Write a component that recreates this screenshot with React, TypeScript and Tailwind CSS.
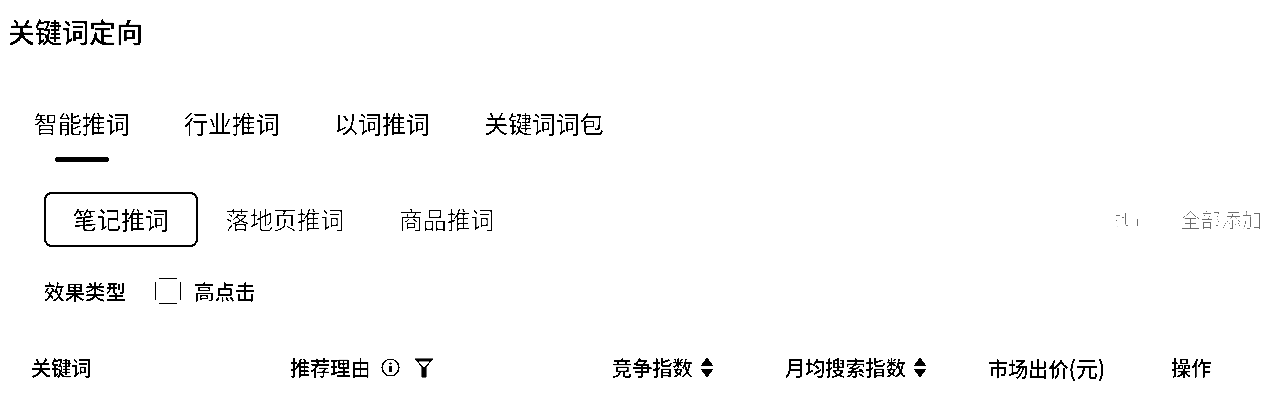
const FONT = "font-['Noto_Sans_CJK_SC','Noto_Sans',sans-serif]";

const TABS = ['智能推词', '行业推词', '以词推词', '关键词词包'];
const SOURCES = ['笔记推词', '落地页推词', '商品推词'];

function SortIcon() {
  return (
    <svg width="14" height="21" viewBox="0 0 14 21" className="ml-[7px]" fill="#000">
      <path d="M7 0.5 13.5 9H0.5Z" />
      <path d="M0.5 12H13.5L7 20.5Z" />
    </svg>
  );
}

function InfoIcon() {
  return (
    <svg width="19" height="19" viewBox="0 0 19 19" fill="none" stroke="#000" className="ml-[10px]">
      <circle cx="9.5" cy="9.5" r="8.4" strokeWidth="1.4" />
      <rect x="8.3" y="8" width="2.6" height="6" fill="#000" stroke="none" />
      <rect x="8.3" y="4.5" width="2.6" height="2" fill="#000" stroke="none" />
    </svg>
  );
}

function FilterIcon() {
  return (
    <svg width="20" height="20" viewBox="0 0 20 20" className="ml-[14px]">
      <path d="M0.5 0.5H19.5L12.5 9V19.5H7.5V9Z" fill="#000" />
      <path d="M4 3.5H16L11 9H9Z" fill="#fff" />
    </svg>
  );
}

export default function App() {
  return (
    <div className={`${FONT} h-[409px] w-[1280px] overflow-hidden bg-white text-black contrast-[40]`}>
      <h1 className="pl-2 pt-[12px] text-[27px] leading-[40px] font-medium">关键词定向</h1>

      {/* Tabs */}
      <div className="mt-[50px] flex gap-[54.5px] pl-[34px]">
        {TABS.map((t, i) => (
          <div key={t} className="relative h-[64px] text-[23.9px] leading-[42px] text-[#222]">
            {t}
            {i === 0 && <span className="absolute top-[55px] left-[21px] h-[5px] w-[54px] rounded-full bg-black" />}
          </div>
        ))}
      </div>

      {/* Source switch */}
      <div className="mt-[26px] flex items-center pl-[44px]">
        {SOURCES.map((s, i) => (
          <div
            key={s}
            className={
              i === 0
                ? 'flex h-[55px] items-center rounded-[8px] border-2 border-black px-[27px] pb-[2px] text-[24px] text-[#222]'
                : 'flex h-[55px] items-center px-[27.5px] pb-[2px] text-[23.75px] text-[#666]'
            }
          >
            {s}
          </div>
        ))}
        <div className="ml-auto flex items-center pr-[18px] text-[#7f7f7f]">
          <span className="mr-[35px] text-[15px]">批量</span>
          <span className="text-[20.5px]">全部添加</span>
        </div>
      </div>

      {/* Effect filter */}
      <div className="mt-[23px] flex h-[42px] items-center pl-[44px] text-[20.5px] font-medium text-[#222]">
        <span>效果类型</span>
        <span className="ml-[29px] h-[26px] w-[26px] rounded-[4px] border border-[#777]" />
        <span className="ml-[13px]">高点击</span>
      </div>

      {/* Table head */}
      <div className="mt-[35px] flex h-[42px] items-center text-[20.15px] font-medium">
        <div className="w-[290px] pl-[31px]">关键词</div>
        <div className="flex w-[322px] items-center">
          推荐理由
          <InfoIcon />
          <FilterIcon />
        </div>
        <div className="flex w-[173px] items-center">
          竞争指数
          <SortIcon />
        </div>
        <div className="flex w-[203px] items-center">
          月均搜索指数
          <SortIcon />
        </div>
        <div className="w-[183px]">
          市场出价<span className="text-[21.5px]">(元)</span>
        </div>
        <div>操作</div>
      </div>
    </div>
  );
}
